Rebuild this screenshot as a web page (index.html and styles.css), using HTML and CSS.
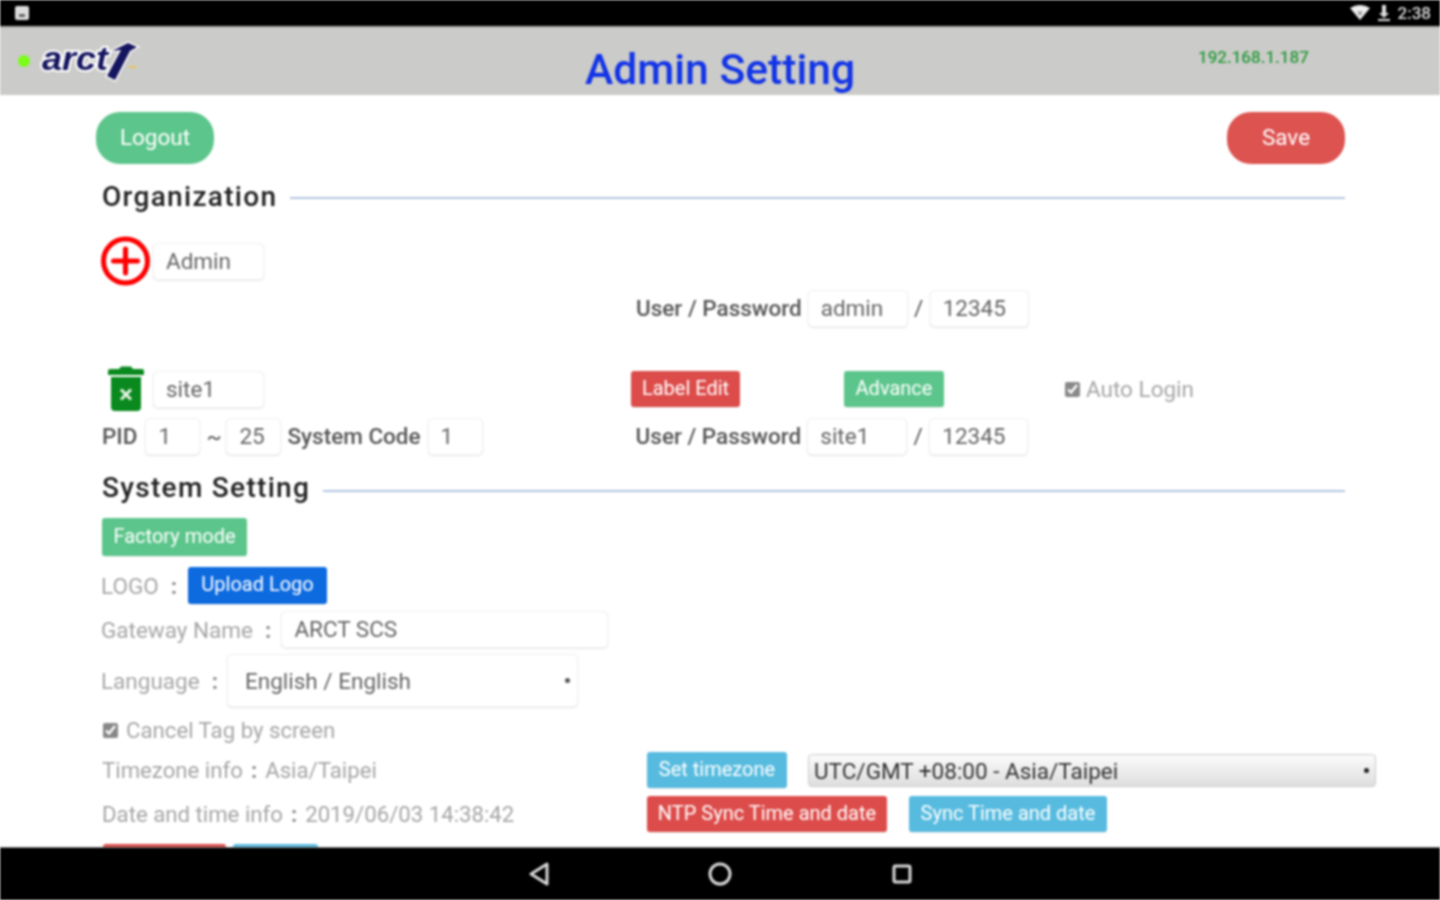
FILE: index.html
```html
<!DOCTYPE html>
<html lang="en">
<head>
<meta charset="UTF-8" />
<meta name="viewport" content="width=device-width, initial-scale=1" />
<title>Admin Setting</title>
<link rel="stylesheet" href="styles.css">
</head>
<body>

<div class="screen">

  <!-- Android status bar -->
  <div class="status-bar">
    <svg class="status-note" width="16" height="16" viewBox="0 0 16 16"><rect x="1" y="1" width="14" height="14" rx="2" fill="#ddd"/><rect x="5" y="9" width="6" height="3" fill="#666"/></svg>
    <div class="status-right">
      <svg width="20" height="16" viewBox="0 0 20 16"><path d="M0 3 Q10 -3 20 3 L10 15 Z" fill="#eee"/><path d="M7 7 Q10 5.500 13 7 L10 11 Z" fill="#999"/></svg>
      <svg width="12" height="18" viewBox="0 0 12 18"><rect x="4" y="1" width="4" height="9" fill="#ddd"/><path d="M1 9 H11 L6 14 Z" fill="#ddd"/><rect x="0" y="15" width="12" height="2" fill="#ddd"/></svg>
      <span class="clock">2:38</span>
    </div>
  </div>

  <!-- App header -->
  <header class="app-header">
    <div class="brand">
      <span class="led"></span>
      <svg class="logo" width="104" height="46" viewBox="0 0 104 46">
        <text x="6" y="32" class="logo-text" textLength="66" lengthAdjust="spacingAndGlyphs">arct</text>
        <path d="M71 38 L85 12 L76 13 L92 5 L101 9 L94 13 L79 42 Z" fill="#14145f" stroke="#fff" stroke-width="3" paint-order="stroke"/>
        <rect x="93" y="28" width="7" height="2" fill="#e8c45a"/>
      </svg>
    </div>
    <h1 class="page-title">Admin Setting</h1>
    <div class="ip-addr">192.168.1.187</div>
  </header>

  <main class="content">

    <div class="action-row">
      <button class="btn-pill green">Logout</button>
      <button class="btn-pill red">Save</button>
    </div>

    <div class="section-head org-head">
      <h2>Organization</h2>
      <span class="rule"></span>
    </div>

    <div class="row admin-row">
      <svg class="icon-add" width="50" height="50" viewBox="0 0 50 50">
        <circle cx="24.500" cy="25" r="22" fill="#fff" stroke="#f00" stroke-width="5"/>
        <path d="M24.500 13 V37 M12.500 25 H36.500" stroke="#f00" stroke-width="5" stroke-linecap="round"/>
      </svg>
      <div class="field name-field">Admin</div>
    </div>

    <div class="row cred-row admin-cred">
      <span class="label-strong">User / Password</span>
      <div class="field cred-user">admin</div>
      <span class="slash">/</span>
      <div class="field cred-pass">12345</div>
    </div>

    <div class="row site-row">
      <svg class="icon-trash" width="36" height="46" viewBox="0 0 36 46">
        <path d="M11 3 L13 0.500 H23 L25 3 H34 Q36 3 36 5 V9 H0 V5 Q0 3 2 3 Z" fill="#0a8a1e"/>
        <path d="M3 11 H33 V41 Q33 45 29 45 H7 Q3 45 3 41 Z" fill="#0a8a1e"/>
        <path d="M13 23.500 L23 33.500 M23 23.500 L13 33.500" stroke="#e8f3e8" stroke-width="3"/>
      </svg>
      <div class="field name-field">site1</div>
      <button class="btn btn-red label-edit">Label Edit</button>
      <button class="btn btn-green advance">Advance</button>
      <label class="check auto-login"><input type="checkbox" checked> Auto Login</label>
    </div>

    <div class="row pid-row">
      <span class="label-strong pid-label">PID</span>
      <div class="field pid-field">1</div>
      <span class="tilde">~</span>
      <div class="field pid-field">25</div>
      <span class="label-strong code-label">System Code</span>
      <div class="field pid-field">1</div>
      <div class="row cred-row site-cred">
        <span class="label-strong">User / Password</span>
        <div class="field cred-user">site1</div>
        <span class="slash">/</span>
        <div class="field cred-pass">12345</div>
      </div>
    </div>

    <div class="section-head sys-head">
      <h2>System Setting</h2>
      <span class="rule"></span>
    </div>

    <div class="row factory-row">
      <button class="btn btn-green factory">Factory mode</button>
    </div>

    <div class="row logo-row">
      <span class="label-light">LOGO</span>
      <span class="colon">:</span>
      <button class="btn btn-blue upload">Upload Logo</button>
    </div>

    <div class="row gateway-row">
      <span class="label-light">Gateway Name</span>
      <span class="colon">:</span>
      <div class="field gateway-field">ARCT SCS</div>
    </div>

    <div class="row lang-row">
      <span class="label-light">Language</span>
      <span class="colon">:</span>
      <div class="field lang-field">English / English<span class="caret"></span></div>
    </div>

    <label class="check cancel-tag"><input type="checkbox" checked> Cancel Tag by screen</label>

    <div class="split-row tz-row">
      <div class="split-left label-light">Timezone info<span class="colon">:</span>Asia/Taipei</div>
      <div class="split-right">
        <button class="btn btn-cyan set-tz">Set timezone</button>
        <div class="tz-select">UTC/GMT +08:00 - Asia/Taipei<span class="caret dark"></span></div>
      </div>
    </div>

    <div class="split-row date-row">
      <div class="split-left label-light">Date and time info<span class="colon">:</span>2019/06/03 14:38:42</div>
      <div class="split-right">
        <button class="btn btn-red ntp">NTP Sync Time and date</button>
        <button class="btn btn-cyan sync">Sync Time and date</button>
      </div>
    </div>

    <!-- next row of buttons, only the top edge shows above the nav bar -->
    <div class="row cut-row">
      <div class="btn btn-red cut-red"></div>
      <div class="btn btn-cyan cut-blue"></div>
    </div>

  </main>

  <!-- Android nav bar -->
  <nav class="nav-bar">
    <svg width="24" height="26" viewBox="0 0 24 26"><path d="M20 3 V23 L4 13 Z" fill="none" stroke="#d8d8d8" stroke-width="3" stroke-linejoin="round"/></svg>
    <svg width="26" height="26" viewBox="0 0 26 26"><circle cx="13" cy="13" r="10" fill="none" stroke="#d8d8d8" stroke-width="3"/></svg>
    <svg class="nav-recent" width="24" height="24" viewBox="0 0 24 24"><rect x="4" y="4" width="16" height="16" rx="1.500" fill="none" stroke="#d8d8d8" stroke-width="3"/></svg>
  </nav>

</div>

</body>
</html>
```

FILE: styles.css
```css
html, body {
  margin: 0;
  background: #fff;
  height: 100%;
  overflow: hidden;
  font-family: Roboto, 'Liberation Sans', sans-serif;
}

/* source is an upscaled phone capture so everything is a bit soft */
.screen {
  width: 1440px;
  height: 900px;
  display: flex;
  flex-direction: column;
  background: #fff;
  overflow: hidden;
  filter: blur(0.8px);
}

.status-bar {
  height: 26px;
  flex: none;
  background: #000;
  display: flex;
  align-items: center;
  justify-content: space-between;
  padding: 0 9px 0 14px;
}
.status-right {
  display: flex;
  align-items: center;
  gap: 8px;
}
.clock {
  color: #ddd;
  font-size: 17px;
  font-weight: 500;
}

.app-header {
  height: 69px;
  flex: none;
  box-sizing: border-box;
  background: #cbcbc9;
  border-top: 2px solid #b0b0ae;
  position: relative;
  display: flex;
  justify-content: center;
}
.brand {
  position: absolute;
  left: 18px;
  top: 10px;
  display: flex;
  align-items: center;
}
.led {
  width: 12px;
  height: 12px;
  border-radius: 50%;
  background: #7cfc1a;
  margin-right: 6px;
}
.logo-text {
  font-family: 'Liberation Sans', sans-serif;
  font-size: 34px;
  font-weight: 700;
  font-style: italic;
  fill: #14145f;
  stroke: #fff;
  stroke-width: 4px;
  paint-order: stroke;
}
.page-title {
  margin: 17px 0 0;
  font-size: 42.600px;
  line-height: 48px;
  font-weight: 500;
  color: #1234e6;
}
.ip-addr {
  position: absolute;
  left: 1198px;
  top: 19px;
  font-size: 17px;
  font-weight: 500;
  color: #2a9a3c;
}

.content {
  flex: 1;
  min-height: 0;
  overflow: hidden;
  box-sizing: border-box;
  padding: 17px 95px 0 101px;
  color: #555;
  font-size: 22.500px;
}

.row {
  display: flex;
  align-items: center;
}

.action-row {
  display: flex;
  justify-content: space-between;
  margin-left: -5px;
}
.btn-pill {
  width: 118px;
  height: 52px;
  border: none;
  border-radius: 24px;
  color: #fff;
  font: 22.500px Roboto, sans-serif;
  padding: 0 0 2px;
}
.btn-pill.green { background: #5cc58b; }
.btn-pill.red { background: #dc5350; }

.section-head {
  display: flex;
  align-items: center;
  gap: 13px;
}
.section-head h2 {
  margin: 0;
  padding-left: 1px;
  font-size: 28px;
  line-height: 36px;
  font-weight: 500;
  letter-spacing: 1.300px;
  color: #222;
}
.rule {
  flex: 1;
  height: 2px;
  background: #b4c6e0;
}
.org-head { margin-top: 15px; }
.org-head .rule { margin-top: 1px; }
.sys-head { margin-top: 15px; }
.sys-head .rule { margin-top: 5px; }

.field {
  box-sizing: border-box;
  height: 37px;
  line-height: 35px;
  padding: 0 12px;
  background: #fff;
  border: 1px solid #f1f1f1;
  border-radius: 5px;
  box-shadow: 0 1px 2px rgba(0, 0, 0, 0.1);
  color: #666;
  white-space: nowrap;
}

.admin-row {
  margin-top: 22px;
  height: 48px;
  gap: 2px;
}
.name-field { width: 111px; }

.cred-row { gap: 6px; }
.admin-cred {
  margin-top: 4px;
  height: 38px;
  padding-left: 535px;
}
.site-cred { margin-left: 147px; }
.cred-user { width: 100px; }
.cred-pass { width: 99px; }
.slash {
  width: 10px;
  text-align: center;
  color: #555;
}
.label-strong {
  font-weight: 500;
  color: #555;
  white-space: nowrap;
}
.label-light {
  color: #a6a6a6;
  white-space: nowrap;
}

.site-row {
  margin-top: 39px;
  height: 46px;
  padding-left: 7px;
}
.icon-trash { margin-right: 9px; }

.btn {
  box-sizing: border-box;
  height: 36px;
  border: none;
  border-radius: 3px;
  padding: 0 0 3px;
  color: #fff;
  font: 20px Roboto, sans-serif;
  white-space: nowrap;
  box-shadow: 0 1px 1px rgba(0, 0, 0, 0.08);
}
.btn-red { background: #dc4c4a; }
.btn-green { background: #5cc58b; }
.btn-blue { background: #0d6adf; }
.btn-cyan { background: #57bbdf; }

.label-edit { width: 109px; margin-left: 367px; }
.advance { width: 100px; margin-left: 104px; }

.check {
  display: flex;
  align-items: center;
  gap: 6px;
  color: #a6a6a6;
}
.check input {
  margin: 0;
  width: 15px;
  height: 15px;
  accent-color: #888;
}
.auto-login { margin-left: 121px; }

.pid-row {
  margin-top: 5px;
  height: 38px;
  gap: 6px;
}
.pid-label { padding-left: 1px; margin-right: 2px; }
.pid-field { width: 55px; }
.tilde { width: 14px; text-align: center; }
.code-label { margin-right: 1px; }

.factory-row { margin-top: 12px; }
.factory { width: 145px; height: 38px; margin-left: 1px; }

.logo-row { margin-top: 11px; }
.upload { width: 139px; height: 37px; }
.colon {
  margin: 0 10px 0 12px;
  color: #888;
  font-weight: 700;
}
.logo-row .colon { margin-right: 11px; }

.gateway-row { margin-top: 7px; }
.gateway-field { width: 327px; }

.lang-row { margin-top: 6px; }
.lang-field {
  position: relative;
  width: 351px;
  height: 53px;
  line-height: 53px;
  margin-left: -1px;
  padding-left: 17px;
}
.caret {
  position: absolute;
  right: 7px;
  top: 23px;
  width: 5px;
  height: 5px;
  border-radius: 50%;
  background: #555;
}
.caret.dark { top: 13px; right: 6px; background: #222; }

.cancel-tag {
  margin-top: 9px;
  height: 28px;
  padding-left: 2px;
  gap: 8px;
  font-size: 22.200px;
}

.split-row {
  display: flex;
  align-items: center;
}
.split-left { width: 546px; flex: none; font-size: 22.200px; padding-left: 1px; box-sizing: border-box; }
.split-right {
  display: flex;
  align-items: center;
  flex: 1;
}
.split-left .colon { margin: 0 8px 0 8px; }

.tz-row { margin-top: 8px; height: 36px; }
.set-tz { width: 140px; }
.tz-select {
  position: relative;
  flex: none;
  box-sizing: border-box;
  width: 568px;
  height: 33px;
  line-height: 32px;
  margin-left: 21px;
  padding-left: 5px;
  border-radius: 4px;
  border: 1px solid #ccc;
  background: linear-gradient(#fbfbfb, #dedede);
  color: #333;
  white-space: nowrap;
}
.date-row { margin-top: 8px; height: 36px; }
.ntp { width: 240px; }
.sync { width: 198px; margin-left: 22px; }

.cut-row { margin-top: 12px; gap: 7px; padding-left: 2px; }
.cut-red { width: 123px; }
.cut-blue { width: 85px; }

.nav-bar {
  height: 53px;
  flex: none;
  box-sizing: border-box;
  background: #000;
  border-top: 1px solid #777;
  display: flex;
  align-items: center;
  justify-content: center;
  gap: 156px;
}
.nav-recent { margin-left: 1px; }
```
